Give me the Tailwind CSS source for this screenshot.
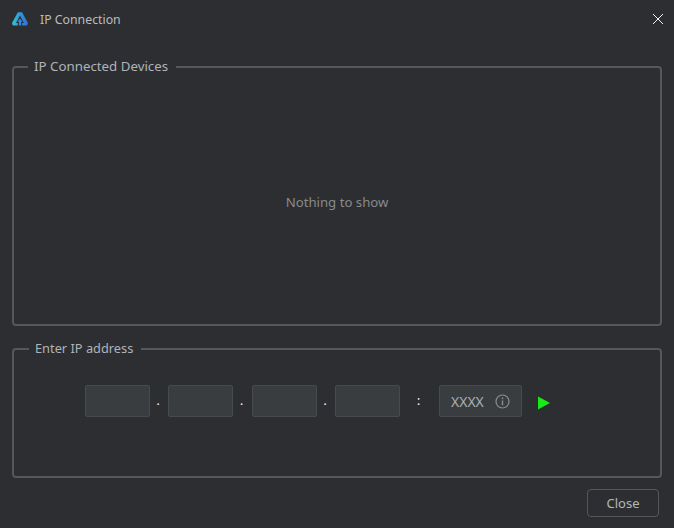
<!DOCTYPE html>
<html>
  <head>
    <title>IP Connection</title>
    <meta charset="UTF-8" />
    <script src="https://cdn.jsdelivr.net/npm/@tailwindcss/browser@4"></script>
  </head>
  <body class="h-[528px] w-[674px] overflow-hidden bg-[#2d2e32] font-['Noto_Sans',sans-serif] text-[#b4b7ba]">
    <!-- title bar -->
    <div class="flex h-[38px] items-center pl-[12px] pr-[10px]">
      <svg class="h-[14px] w-[16px]" viewBox="0 0 16 14">
        <defs>
          <linearGradient id="logo" x1="0" y1="0" x2="1" y2="0">
            <stop offset="0" stop-color="#2fc4d8" />
            <stop offset="1" stop-color="#2f6ddc" />
          </linearGradient>
        </defs>
        <path fill="url(#logo)" d="M5.900 0.300H10.100L15.600 10.300C16.300 11.800 15.500 13.600 14 13.600H10.200V11H12L8 3.600 4 11H5.800V13.600H2C.5 13.600-.3 11.800 .4 10.300Z" />
        <path fill="#2f8ae0" d="M8 6.500 10.600 9.800H9.100V13.600H6.900V9.800H5.400Z" />
      </svg>
      <span class="ml-[12px] pt-[2px] text-[12.300px] text-[#b9bcbf]">IP Connection</span>
      <svg class="ml-auto h-[12px] w-[12px]" viewBox="0 0 12 12">
        <path d="M1 1 11 11M11 1 1 11" stroke="#f2f2f2" stroke-width="1" fill="none" />
      </svg>
    </div>

    <div class="px-[12px]">
      <!-- devices -->
      <fieldset class="mt-[19px] h-[269px] rounded-[4px] border-2 border-[#55575a]">
        <legend class="ml-[14px] pb-[2px] pl-[6px] pr-[8px] text-[13.300px] leading-[18px] text-[#aeb4b8]">IP Connected Devices</legend>
        <div class="flex h-[248px] items-center justify-center pt-[4px] text-[13.200px] text-[#888a8d]">Nothing to show</div>
      </fieldset>

      <!-- ip address -->
      <fieldset class="mt-[13px] h-[139px] rounded-[4px] border-2 border-[#55575a]">
        <legend class="ml-[15px] pb-[2px] pl-[6px] pr-[8px] text-[12.800px] leading-[18px] text-[#aeb4b8]">Enter IP address</legend>
        <div class="ml-[71px] mt-[26px] flex h-[32px] items-center">
          <div class="h-[32px] w-[65px] rounded-[2px] border border-[#474b4f] bg-[#3a3d40]"></div>
          <span class="flex w-[18px] justify-center pr-[2px] text-[12px] text-white">.</span>
          <div class="h-[32px] w-[65px] rounded-[2px] border border-[#474b4f] bg-[#3a3d40]"></div>
          <span class="flex w-[19px] justify-center pr-[2px] text-[12px] text-white">.</span>
          <div class="h-[32px] w-[65px] rounded-[2px] border border-[#474b4f] bg-[#3a3d40]"></div>
          <span class="flex w-[18px] justify-center pr-[2px] text-[12px] text-white">.</span>
          <div class="h-[32px] w-[65px] rounded-[2px] border border-[#474b4f] bg-[#3a3d40]"></div>
          <span class="flex w-[38px] justify-center pr-[1px] text-[12px] text-white">:</span>
          <div class="ml-[1px] flex h-[32px] w-[83px] items-center rounded-[2px] border border-[#474b4f] bg-[#3a3d40] pl-[11px]">
            <span class="text-[14px] text-[#a9adb1]">XXXX</span>
            <svg class="ml-[11px] h-[15px] w-[15px]" viewBox="0 0 15 15">
              <circle cx="7.500" cy="7.500" r="6.500" fill="none" stroke="#8a8d90" stroke-width="1.200" />
              <path d="M7.500 6.500V11.300" stroke="#8a8d90" stroke-width="1.400" />
              <circle cx="7.500" cy="4.300" r="0.900" fill="#8a8d90" />
            </svg>
          </div>
          <svg class="ml-[15px] mt-[3px] h-[14px] w-[14px]" viewBox="0 0 14 14">
            <path d="M1 .5 13 7 1 13.500Z" fill="#17ea17" />
          </svg>
        </div>
      </fieldset>

      <div class="mt-[11px] flex justify-end pr-[3px]">
        <button class="h-[28px] w-[72px] rounded-[4px] border border-[#55575a] pt-[2px] text-[13px] text-[#b4b7ba]">Close</button>
      </div>
    </div>
  </body>
</html>
